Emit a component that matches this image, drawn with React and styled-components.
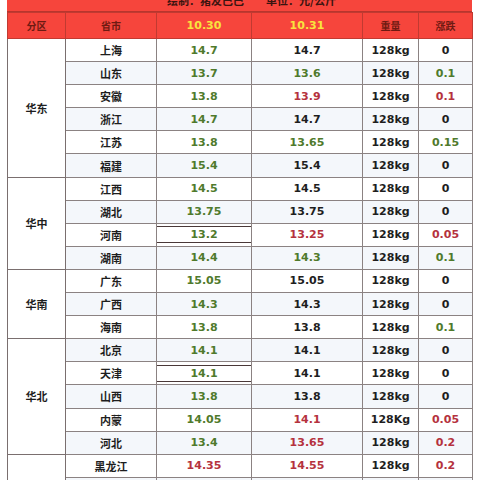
import React from 'react';
import styled, { createGlobalStyle } from 'styled-components';

const Global = createGlobalStyle`
  html, body { margin: 0; padding: 0; background: #fff; }
  body { width: 480px; height: 480px; overflow: hidden; }
`;

const C = { g: '#4f7a2c', r: '#b5323e', k: '#1e1e1e' };

const data = [
  { area: '华东', rows: [
    ['上海', '14.7', 'g', '14.7', 'k', '128kg', '0', 'k'],
    ['山东', '13.7', 'g', '13.6', 'g', '128kg', '0.1', 'g'],
    ['安徽', '13.8', 'g', '13.9', 'r', '128kg', '0.1', 'r'],
    ['浙江', '14.7', 'g', '14.7', 'k', '128kg', '0', 'k'],
    ['江苏', '13.8', 'g', '13.65', 'g', '128kg', '0.15', 'g'],
    ['福建', '15.4', 'g', '15.4', 'k', '128kg', '0', 'k'],
  ]},
  { area: '华中', rows: [
    ['江西', '14.5', 'g', '14.5', 'k', '128kg', '0', 'k'],
    ['湖北', '13.75', 'g', '13.75', 'k', '128kg', '0', 'k'],
    ['河南', '13.2', 'g', '13.25', 'r', '128kg', '0.05', 'r', true],
    ['湖南', '14.4', 'g', '14.3', 'g', '128kg', '0.1', 'g'],
  ]},
  { area: '华南', rows: [
    ['广东', '15.05', 'g', '15.05', 'k', '128kg', '0', 'k'],
    ['广西', '14.3', 'g', '14.3', 'k', '128kg', '0', 'k'],
    ['海南', '13.8', 'g', '13.8', 'k', '128kg', '0.1', 'g'],
  ]},
  { area: '华北', rows: [
    ['北京', '14.1', 'g', '14.1', 'k', '128kg', '0', 'k'],
    ['天津', '14.1', 'g', '14.1', 'k', '128kg', '0', 'k', true],
    ['山西', '13.8', 'g', '13.8', 'k', '128kg', '0', 'k'],
    ['内蒙', '14.05', 'g', '14.1', 'r', '128Kg', '0.05', 'r'],
    ['河北', '13.4', 'g', '13.65', 'r', '128kg', '0.2', 'r'],
  ]},
  { area: '东北', rows: [
    ['黑龙江', '14.35', 'r', '14.55', 'r', '128kg', '0.2', 'r'],
    ['吉林', '14.3', 'r', '14.5', 'r', '128kg', '0.2', 'r'],
    ['辽宁', '14.2', 'r', '14.4', 'r', '128kg', '0.2', 'r'],
  ]},
];

const Page = styled.div`
  padding-left: 7px;
  width: 465px;
  font-family: "DejaVu Sans", "Noto Sans CJK SC", sans-serif;
  font-weight: bold;
  font-size: 11px;
`;

const TitleBar = styled.div`
  height: 12px;
  overflow: hidden;
  background: #f6453c;
  border-bottom: 1px solid #b8352d;
  box-sizing: border-box;
`;

const TitleText = styled.div`
  margin-top: -7px;
  padding-left: 160px;
  display: flex;
  gap: 22px;
  color: #3a1410;
  font-family: "Noto Sans CJK SC", sans-serif;
  font-size: 11px;
  line-height: 14px;
`;

const Table = styled.table`
  width: 465px;
  border-collapse: collapse;
  table-layout: fixed;
`;

const Th = styled.th`
  height: 25px;
  padding: 0;
  background: #f6453c;
  border: 1px solid #c13a31;
  color: ${p => p.$yellow ? '#f9e33e' : '#6e1a12'};
  font-family: "DejaVu Sans", "Noto Sans CJK SC", sans-serif;
  font-size: ${p => p.$yellow ? '11px' : '10px'};
  font-weight: bold;
`;

const Tr = styled.tr`
  height: 23.1px;
  background: ${p => p.$alt ? '#f4f7fb' : '#ffffff'};
`;

const Td = styled.td`
  padding: 0;
  border: 1px solid #8b8282;
  text-align: center;
  color: ${p => C[p.$c] || C.k};
  font-family: ${p => p.$cjk ? '"Noto Sans CJK SC", sans-serif' : '"DejaVu Sans", sans-serif'};
  font-size: 11px;
  font-weight: bold;
`;

const AreaTd = styled(Td)`
  background: #fff;
  border-color: #7a6f6f;
`;

const Boxed = styled.div`
  margin: 0 -1px;
  height: 17px;
  line-height: 16px;
  border: 1px solid #4a3838;
  box-sizing: border-box;
`;

export default function App() {
  let idx = 0;
  return (
    <>
      <Global />
      <Page>
        <TitleBar>
          <TitleText><span>绘制：猪友巴巴</span><span>单位：元/公斤</span></TitleText>
        </TitleBar>
        <Table>
          <colgroup>
            <col style={{ width: 58 }} />
            <col style={{ width: 91 }} />
            <col style={{ width: 95 }} />
            <col style={{ width: 111 }} />
            <col style={{ width: 56 }} />
            <col style={{ width: 54 }} />
          </colgroup>
          <thead>
            <tr>
              <Th>分区</Th>
              <Th>省市</Th>
              <Th $yellow>10.30</Th>
              <Th $yellow>10.31</Th>
              <Th>重量</Th>
              <Th>涨跌</Th>
            </tr>
          </thead>
          <tbody>
            {data.map(group => group.rows.map((r, i) => {
              const alt = idx++ % 2 === 1;
              return (
                <Tr key={r[0]} $alt={alt}>
                  {i === 0 && <AreaTd $cjk rowSpan={group.rows.length}>{group.area}</AreaTd>}
                  <Td $cjk>{r[0]}</Td>
                  <Td $c={r[2]}>{r[8] ? <Boxed>{r[1]}</Boxed> : r[1]}</Td>
                  <Td $c={r[4]}>{r[3]}</Td>
                  <Td>{r[5]}</Td>
                  <Td $c={r[7]}>{r[6]}</Td>
                </Tr>
              );
            }))}
          </tbody>
        </Table>
      </Page>
    </>
  );
}
